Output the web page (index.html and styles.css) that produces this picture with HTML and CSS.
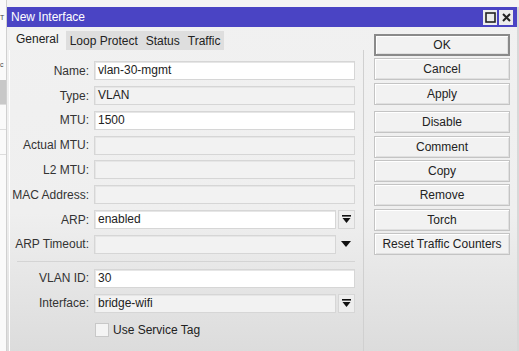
FILE: index.html
```html
<!DOCTYPE html>
<html lang="en">
<head>
    <meta charset="UTF-8">
    <title>New Interface</title>
    <link rel="stylesheet" href="styles.css">
</head>
<body>
<div class="desk">
    <div class="behind">
        <span class="behind-t">T</span>
        <span class="behind-c">c</span>
        <div class="behind-row sel"></div>
        <div class="behind-row"></div>
        <div class="behind-row"></div>
    </div>

    <div class="window">
        <div class="titlebar">
            <span class="title">New Interface</span>
            <span class="tb-btn">
                <svg width="11" height="11" viewBox="0 0 11 11"><rect x="1" y="1" width="9" height="9" fill="none" stroke="#222" stroke-width="1.6"/></svg>
            </span>
            <span class="tb-btn">
                <svg width="11" height="11" viewBox="0 0 11 11"><path d="M2 2L9 9M9 2L2 9" stroke="#222" stroke-width="2"/></svg>
            </span>
        </div>

        <div class="wbody">
            <div class="left">
                <div class="tabs">
                    <div class="tab active">General</div>
                    <div class="tab">Loop Protect</div>
                    <div class="tab">Status</div>
                    <div class="tab">Traffic</div>
                </div>
                <div class="panel">
                    <div class="row"><label>Name:</label><div class="field edit">vlan-30-mgmt</div></div>
                    <div class="row"><label>Type:</label><div class="field">VLAN</div></div>
                    <div class="row"><label>MTU:</label><div class="field edit">1500</div></div>
                    <div class="row"><label>Actual MTU:</label><div class="field"></div></div>
                    <div class="row"><label>L2 MTU:</label><div class="field"></div></div>
                    <div class="row"><label>MAC Address:</label><div class="field"></div></div>
                    <div class="row"><label>ARP:</label><div class="field edit short">enabled</div>
                        <div class="dd-btn">
                            <svg width="9" height="9" viewBox="0 0 9 9"><rect x="0" y="0" width="9" height="1.6" fill="#111"/><path d="M0.5 3H8.5L4.5 8Z" fill="#111"/></svg>
                        </div>
                    </div>
                    <div class="row"><label>ARP Timeout:</label><div class="field short"></div>
                        <div class="dd-plain">
                            <svg width="10" height="6" viewBox="0 0 10 6"><path d="M0 0H10L5 6Z" fill="#111"/></svg>
                        </div>
                    </div>
                    <div class="sep"></div>
                    <div class="row"><label>VLAN ID:</label><div class="field edit">30</div></div>
                    <div class="row"><label>Interface:</label><div class="field short">bridge-wifi</div>
                        <div class="dd-btn">
                            <svg width="9" height="9" viewBox="0 0 9 9"><rect x="0" y="0" width="9" height="1.6" fill="#111"/><path d="M0.5 3H8.5L4.5 8Z" fill="#111"/></svg>
                        </div>
                    </div>
                    <div class="row"><label></label><div class="check"><span class="box"></span>Use Service Tag</div></div>
                </div>
            </div>

            <div class="right">
                <button class="btn default">OK</button>
                <button class="btn">Cancel</button>
                <button class="btn gap-after">Apply</button>
                <button class="btn">Disable</button>
                <button class="btn">Comment</button>
                <button class="btn">Copy</button>
                <button class="btn">Remove</button>
                <button class="btn">Torch</button>
                <button class="btn">Reset Traffic Counters</button>
            </div>
        </div>
    </div>
</div>
</body>
</html>
```

FILE: styles.css
```css
body {
    margin: 0;
    background-color: #f4f4f4;
    font-family: 'Liberation Sans', Arial, sans-serif;
    font-size: 12px;
    color: #222;
    overflow: hidden;
}

.desk {
    display: flex;
    height: 351px;
}

.behind {
    width: 6px;
    background-color: #fafafa;
    border-right: 1px solid #d0d0d0;
    display: flex;
    flex-direction: column;
    overflow: hidden;
    font-size: 7px;
    color: #444;
}

.behind-t {
    margin-top: 14px;
}

.behind-c {
    margin-top: 40px;
}

.behind-row {
    height: 24px;
    border-bottom: 1px solid #ddd;
}

.behind-row.sel {
    margin-top: 12px;
    background-color: #c8c8c8;
}

.window {
    width: 511px;
    margin-top: 7px;
    display: flex;
    flex-direction: column;
    background: linear-gradient(#f1f1f1 0%, #efefef 60%, #dcdcdc 100%);
    border-right: 2px solid #d8d8d8;
}

.titlebar {
    height: 20px;
    background-color: #4a44c4;
    display: flex;
    align-items: center;
    padding: 0 4px 0 4px;
    gap: 2px;
}

.title {
    flex: 1;
    color: #fff;
    font-size: 12px;
}

.tb-btn {
    width: 14px;
    height: 15px;
    background-color: #ececec;
    display: flex;
    align-items: center;
    justify-content: center;
}

.wbody {
    display: flex;
    padding: 4px 0 0 2px;
    flex: 1;
}

.left {
    width: 355px;
    display: flex;
    flex-direction: column;
}

.tabs {
    display: flex;
    height: 19px;
    padding-left: 1px;
}

.tab {
    padding: 3px 4px 0 4px;
    background-color: #dedede;
    font-size: 12px;
}

.tab.active {
    background-color: #f3f3f3;
    padding: 2px 7px 0 6px;
    margin-top: -1px;
}

.panel {
    flex: 1;
    border-left: 1px solid #fff;
    border-right: 1px solid #d0d0d0;
    display: flex;
    flex-direction: column;
    padding-top: 11px;
    gap: 5.3px;
}

.row {
    display: flex;
    align-items: center;
    height: 19.5px;
}

.row label {
    width: 79px;
    text-align: right;
    margin-right: 5px;
    color: #333;
}

.field {
    height: 17px;
    line-height: 17px;
    border: 1px solid #d6d6d6;
    box-shadow: inset 1px 1px 0 #e6e6e6;
    background-color: #f2f2f2;
    padding-left: 3px;
    width: 256px;
}

.field.edit {
    background-color: #fff;
}

.field.short {
    width: 237px;
}

.dd-btn {
    width: 15px;
    height: 17px;
    margin-left: 2px;
    border: 1px solid #d6d6d6;
    background-color: #eee;
    display: flex;
    align-items: center;
    justify-content: center;
}

.dd-plain {
    width: 17px;
    margin-left: 2px;
    display: flex;
    justify-content: center;
}

.sep {
    height: 1px;
    background-color: #d4d4d4;
    margin: 2px 8px 1px 7px;
}

.check {
    display: flex;
    align-items: center;
    gap: 4px;
    margin-top: 3px;
}

.box {
    width: 12px;
    height: 12px;
    border: 1px solid #c8c8c8;
    background-color: #f4f4f4;
    margin-left: 1px;
}

.right {
    display: flex;
    flex-direction: column;
    padding: 3px 0 0 10px;
    gap: 2.4px;
}

.btn {
    width: 136px;
    height: 22px;
    font-family: 'Liberation Sans', Arial, sans-serif;
    font-size: 12px;
    color: #222;
    background-color: #f2f2f2;
    border: 1px solid #c4c4c4;
    box-shadow: inset 1px 1px 0 #fff, inset -1px -1px 0 #e0e0e0;
    padding: 0;
}

.btn.default {
    border: 2px solid #8a8a8a;
}

.btn.gap-after {
    margin-bottom: 4px;
}
```
